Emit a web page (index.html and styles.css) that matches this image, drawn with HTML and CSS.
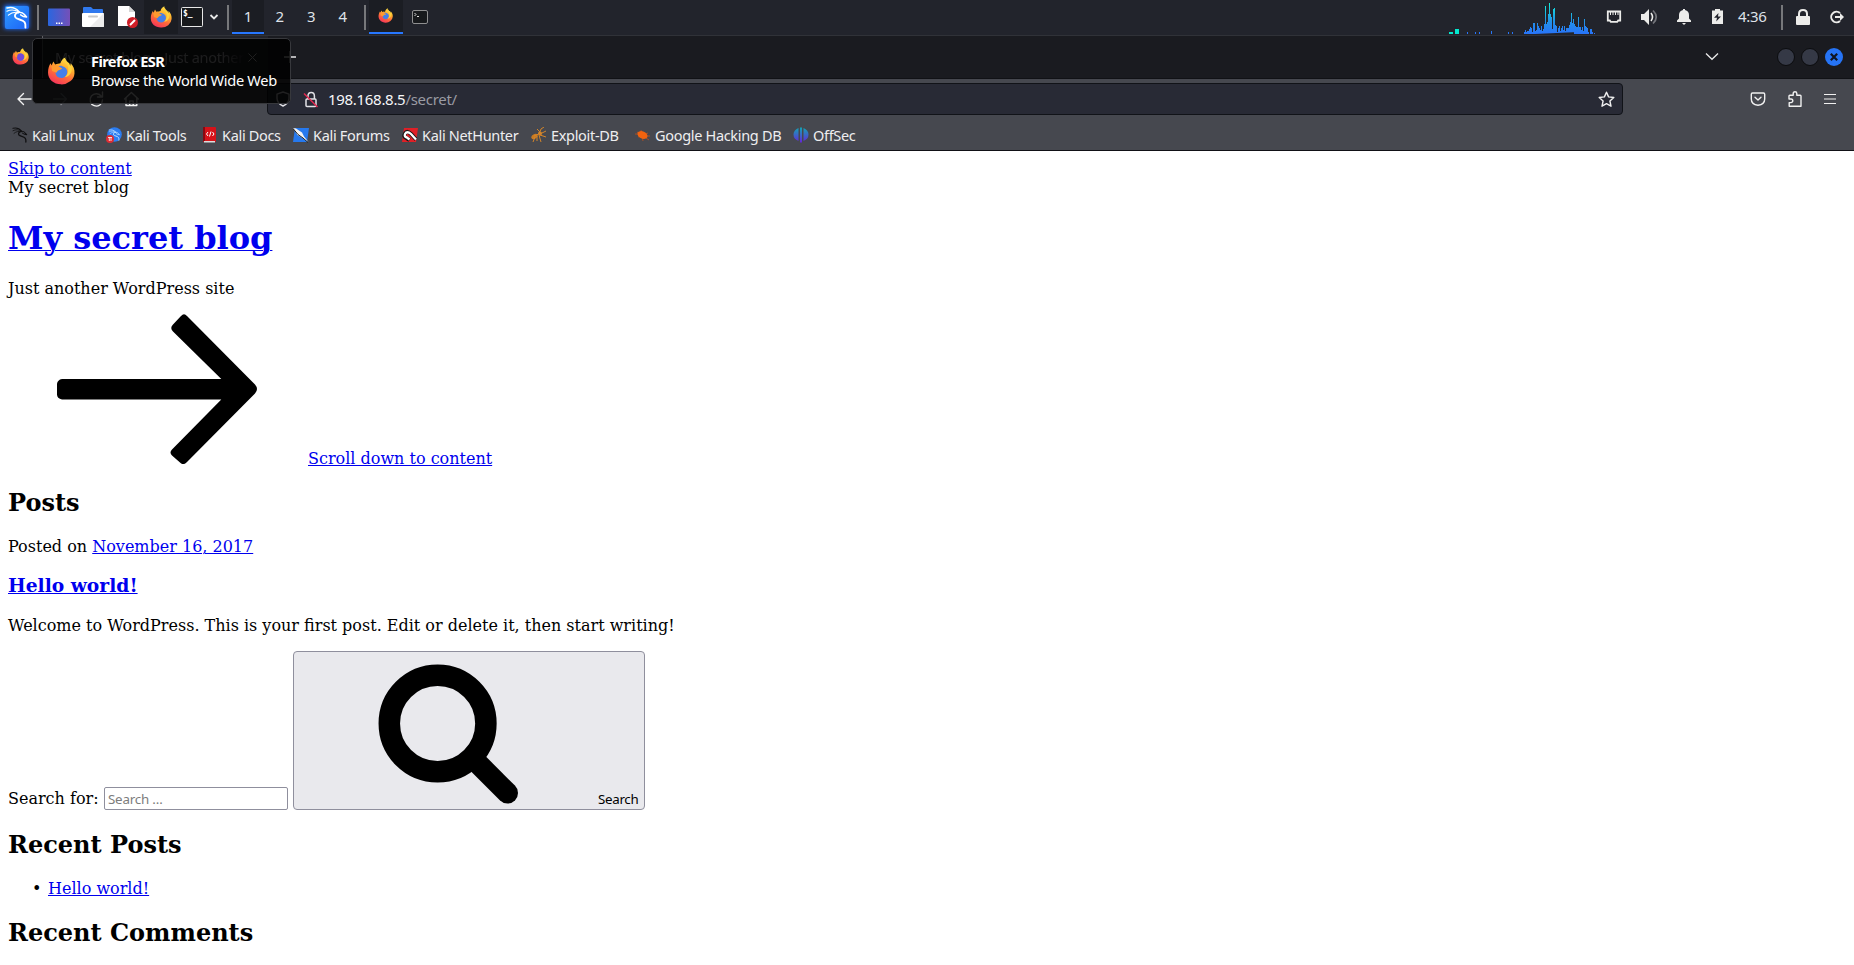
FILE: index.html
```html
<!DOCTYPE html>
<html lang="en">
<head>
<meta charset="utf-8">
<title>My secret blog – Just another WordPress site</title>
<link rel="stylesheet" href="styles.css">
</head>
<body>
<svg class="defs" width="0" height="0" aria-hidden="true">
  <defs>
    <linearGradient id="fxg" x1=".8" y1="0" x2=".3" y2="1"><stop offset="0" stop-color="#fff04f"/><stop offset=".35" stop-color="#ffb22e"/><stop offset=".65" stop-color="#ff6a3a"/><stop offset="1" stop-color="#f4335c"/></linearGradient>
    <linearGradient id="kb" x1="0" y1="0" x2="1" y2="1"><stop offset="0" stop-color="#2e9bff"/><stop offset="1" stop-color="#1d62f5"/></linearGradient>
    <linearGradient id="dg" x1="0" y1="0" x2="1" y2="0"><stop offset="0" stop-color="#2a66df"/><stop offset="1" stop-color="#7550b8"/></linearGradient>
    <linearGradient id="cpu" gradientUnits="userSpaceOnUse" x1="0" y1="3" x2="0" y2="34"><stop offset="0" stop-color="#12f0d8"/><stop offset=".55" stop-color="#2196e8"/><stop offset="1" stop-color="#2873f8"/></linearGradient>
    <linearGradient id="ofs" x1="0" y1="0" x2="0" y2="1"><stop offset="0" stop-color="#12a5b5"/><stop offset="1" stop-color="#6426d8"/></linearGradient>
    <symbol id="fox" viewBox="0 0 22 22">
      <path fill="url(#fxg)" d="M14.500.3c-.6 1.400-.4 2.600.8 3.900 1.400.9 2.300 1.800 2.900 3.300l.4-2.600c2.100 2.200 3.300 4.700 3 8A10.200 9.200 0 0 1 11 21.500C5.200 21.500.8 17.500.8 12.200c0-3 .9-5.400 2-7.200l.8 1.700L5 3.500l1.400 2.300C8 5.200 9.300 5.600 10.500 5c.6-2.300 2-4.100 4-4.700z"/>
      <path fill="#457fe8" d="M6.600 10c.9-2.700 3.300-3.500 5.500-2.800 2.700.8 4.200 2.800 3.800 5.300-.4 2.500-2.600 4-5 3.900-2.900-.1-4.600-2-4.300-6.400z"/>
      <path fill="#ff9a2f" d="M3.500 7c2-.8 4.500-.5 6.200.6 1 .6 1.400 1.100 2.200 1.200-.3 1-1.700 1.100-2.900 1.600-.8.4-1 1.300-1.700 1.900L4 11z"/>
      <path fill="#ffd23c" d="M13.500 3.500c2.500 1.500 3.100 3.400 3.200 6 .1 3-1 5-2.800 6.500 4.200-.9 6.300-4.200 5.400-8.500-.8-.6-1.300-1-1.800-2.600C16 4 15 3 14.500 1z"/>
    </symbol>
    <symbol id="dragon" viewBox="0 0 24 24">
      <g fill="none" stroke="currentColor" stroke-linecap="round" stroke-linejoin="round">
        <path stroke-width="1.600" d="M1.500 2C6 1 11 2 14 6"/>
        <path stroke-width="1.200" d="M1.500 5.500C6 3.200 10 4 14 6M3 9.500C6.500 6.500 10 6 14 7"/>
        <path stroke-width="2" d="M14 6.500c-4 .6-5 3.500-3.500 5.500 2 2.500 7 1.700 9.500 5 .8 1.200 1 3 .8 5.500"/>
        <path stroke-width="1.600" d="M13 6.500c3-.3 5.500.6 6.500 2.200l2.500 2.800-3.200-.5-3-1.800"/>
      </g>
    </symbol>
  </defs>
</svg>

<header class="panel">
  <span class="cell kali"><svg width="33" height="33" viewBox="0 0 33 33"><rect class="glow" x="4" y="4" width="25" height="24" rx="2" fill="#1d6dff"/><rect x="5" y="5" width="24" height="23" rx="2" fill="url(#kb)"/><use href="#dragon" x="5" y="5" width="24" height="23" color="#fff"/></svg></span>
  <i class="sep"></i>
  <span class="cell launch"><svg width="22" height="22" viewBox="0 0 22 22"><rect y="2.500" width="22" height="17.500" rx="1" fill="url(#dg)"/><path d="M8 16.500h1.500V18H8zm2.500 0H12V18h-1.500zm2.500 0h1.500V18H13z" fill="#fff"/></svg></span>
  <span class="cell folder"><svg width="22" height="22" viewBox="0 0 22 22"><path d="M1 9V2q0-1 1-1h7l2 2h9q1 0 1 1v5z" fill="#3079ee"/><rect y="7" width="22" height="14" rx="1" fill="#fff"/><path d="M22 7v13q0 1-1 1H8z" fill="#ececec"/><rect x="6" y="9.500" width="10" height="2" rx="1" fill="#c9c9c9"/></svg></span>
  <span class="cell doc"><svg width="22" height="22" viewBox="0 0 22 22"><path d="M1 0h11l6 6v14H1z" fill="#fff"/><path d="M12 0v6h6z" fill="#d6d6d6"/><circle cx="15.500" cy="16.500" r="5.500" fill="#cf1f28"/><path d="M13 19l5-5" stroke="#fff" stroke-width="2"/></svg></span>
  <span class="cell fxl"><svg width="22" height="22"><use href="#fox"/></svg></span>
  <span class="cell term"><svg width="22" height="20" viewBox="0 0 22 20"><rect x=".5" y=".5" width="21" height="19" rx="1" fill="#17191c" stroke="#e8e8e8"/><text class="prompt" x="2" y="9">$_</text></svg></span>
  <span class="cell chev"><svg width="10" height="8" viewBox="0 0 10 8"><path d="M1.500 2l3.500 3.500L8.500 2" fill="none" stroke="#e8e8e8" stroke-width="1.800"/></svg></span>
  <i class="sep"></i>
  <span class="cell ws on first">1</span><span class="cell ws">2</span><span class="cell ws">3</span><span class="cell ws">4</span>
  <i class="sep s3"></i>
  <span class="cell task on"><svg width="15" height="15"><use href="#fox"/></svg></span>
  <span class="cell task2"><svg width="16" height="14" viewBox="0 0 16 14"><rect x=".5" y=".5" width="15" height="13" rx="1.500" fill="#17191c" stroke="#8f8f90"/><path d="M2.500 3l1.500 1.500L2.500 6M5 6.500h2" fill="none" stroke="#ddd"/></svg></span>
  <span class="tray">
    <svg width="150" height="34" viewBox="0 0 150 34"><path fill="#04e8cf" d="M0 32h4v2H0zm6-3h4v5H6z"/><path fill="url(#cpu)" d="M18 32h1v2h-1zm8 0h1v2h-1zm4 0h1v2h-1zm12-1h1v3h-1zm17 1h1v2h-1zm4 0h1v2h-1zM75 34v-2h1v-2h1v2h1v-1h2v-2h1v-2h1v1h1v4h1v-9h2v9h1v2zM86 34v-3h1v-1h1v-7h1v3h1v2h1v2h1v-4h1v5h1v-2h1v-5h1V6h1v18h1v-2h1V14h1V3h1v11h1v3h1v12h1V9h1V8h1v17h1v1h1v6h1v-4h1v-2h1v5h1v-3h1v-2h1v4h1v-4h1v5h1v-3h3v-3h1v-3h1v-9h1v10h1v-4h1v5h1v4h1v-1h2v5zM125 34v-9h1v1h1v4h2V17h1v10h2v3h1v-3h1v4h1V19h1v7h1v1h1v1h1v4h1v2zM141 34v-5h2v3h1v2zM145 33h1v1h-1z"/></svg>
    <svg width="16" height="14" viewBox="0 0 16 14"><path d="M1.800 1.500h12.400v9h-2l-1 1.400h-6.400l-1-1.400h-2z" fill="none" stroke="#ececea" stroke-width="1.800"/><path d="M4.500 2v3M7 2v3M9.500 2v3M12 2v3" stroke="#ececea"/></svg>
    <svg width="18" height="16" viewBox="0 0 18 16"><path d="M0 5h3l5-5v16l-5-5H0z" fill="#ececea"/><path d="M10 4q3 4 0 8" fill="none" stroke="#ececea" stroke-width="1.600"/><path d="M12 1.500q6.500 6.500 0 13" fill="none" stroke="#74757b" stroke-width="1.700"/></svg>
    <svg class="bell" width="16" height="16" viewBox="0 0 16 16"><path d="M1 13v-1.500l2-2V6q0-4 4-5V0h2v1q4 1 4 5v3.500l2 2V13zM6 14h4l-2 2z" fill="#ececea"/></svg>
    <svg width="11" height="15" viewBox="0 0 11 15"><path d="M3 1.500V0h5v1.500h3V15H0V1.500z" fill="#ececea"/><path d="M6.500 4L2 8.700h3L4.200 12.500 9 7.600H6z" fill="#23242d"/></svg>
    <time>4:36</time><i class="sep"></i>
    <svg class="lock" width="14" height="16" viewBox="0 0 14 16"><rect y="7" width="14" height="9" rx="1" fill="#ececea"/><path d="M3 8V5q0-4 4-4t4 4v3" fill="none" stroke="#ececea" stroke-width="2"/></svg>
    <svg width="16" height="14" viewBox="0 0 16 14"><path d="M11 3a5.300 5.300 0 1 0 0 8" fill="none" stroke="#ececea" stroke-width="2"/><path d="M6 6h5V3l4 4-4 4V8H6z" fill="#ececea"/></svg>
  </span>
</header>

<section class="tabs">
  <svg class="tabfox" width="17" height="17"><use href="#fox"/><circle cx="8.500" cy="9" r="3.400" fill="#7547d8"/></svg>
  <div class="tab"><span>My secret blog – Just another</span><svg width="9" height="9" viewBox="0 0 9 9"><path d="M.5.500l8 8m0-8l-8 8" stroke="#ddd"/></svg></div>
  <svg class="plus" width="12" height="12" viewBox="0 0 12 12"><path d="M6 0v12M0 6h12" stroke="#e8e8e8" stroke-width="1.300"/></svg>
  <div class="win">
    <svg width="14" height="9" viewBox="0 0 14 9"><path d="M1 1.500l6 5.800 6-5.800" fill="none" stroke="#e8e8e8" stroke-width="1.300"/></svg>
    <b></b><b></b><svg class="close" width="18" height="18" viewBox="0 0 18 18"><circle cx="9" cy="9" r="9" fill="#2674f5"/><path d="M5.800 5.800l6.400 6.400m0-6.400l-6.400 6.400" stroke="#101521" stroke-width="2.200"/></svg>
  </div>
</section>

<section class="nav">
  <svg class="navl" width="124" height="18" viewBox="0 0 124 18" fill="none" stroke="#f2f2f2" stroke-width="1.400" stroke-linecap="round" stroke-linejoin="round">
    <path d="M14 9H1m5.500-5.500L1 9l5.500 5.500"/><path stroke="#85868c" d="M36.500 9h13M44 3.500L49.500 9 44 14.500"/><path d="M84.500 6.500A6.200 6.200 0 1 0 85.500 10M85.500 2v5h-5"/><path d="M107.500 9l6.900-6.500L121.300 9M109 8v7.500h10.800V8M112.700 15.500V11h3.500v4.500"/>
  </svg>
  <div class="url">
    <svg width="14" height="16" viewBox="0 0 14 16"><path d="M7 1l6 2.200v4q0 5-6 7.800-6-2.800-6-7.800v-4z" fill="none" stroke="#e2e2e6" stroke-width="1.400" stroke-linejoin="round"/></svg>
    <svg width="16" height="17" viewBox="0 0 16 17"><rect x="3" y="8" width="10" height="7.500" rx="1" fill="none" stroke="#e2e2e6" stroke-width="1.500"/><path d="M5 8V5q0-3.500 3.200-3.500T11.400 5v3" fill="none" stroke="#e2e2e6" stroke-width="1.500"/><path d="M1 2.500l13.500 13.500" stroke="#e22850" stroke-width="1.500"/></svg>
    <span class="addr">198.168.8.5<em>/secret/</em></span>
    <svg class="star" width="17" height="17" viewBox="0 0 17 17"><path d="M8.500 1.200l2.100 4.700 5.200.6-3.900 3.500 1.100 5.200-4.500-2.600L4 15.200 5.100 10 1.200 6.500l5.200-.6z" fill="none" stroke="#f0f0f0" stroke-width="1.400" stroke-linejoin="round"/></svg>
  </div>
  <div class="navr">
    <svg width="16" height="16" viewBox="0 0 16 16" fill="none" stroke="#f0f0f0" stroke-width="1.400" stroke-linecap="round" stroke-linejoin="round"><path d="M2.500 2h11q1.200 0 1.200 1.200V8q0 5.500-6.700 6.200Q1.300 13.500 1.300 8V3.200Q1.300 2 2.500 2zM5 6.300l3 2.800 3-2.800"/></svg>
    <svg width="16" height="18" viewBox="0 0 16 18" fill="none" stroke="#f0f0f0" stroke-width="1.400" stroke-linejoin="round"><path d="M2 6q0-.8.800-.8h3.400V3.500a1.800 1.800 0 0 1 3.600 0v1.700h3.400q.8 0 .8.800v10.200H2.200v-3.600H4a1.800 1.800 0 0 0 0-3.600H2z"/></svg>
    <svg width="14" height="12" viewBox="0 0 14 12"><path d="M1 1.500h12M1 6h12M1 10.500h12" stroke="#f0f0f0" stroke-width="1.200"/></svg>
  </div>
</section>

<nav class="marks">
  <a><svg width="16" height="16"><use href="#dragon" color="#101012"/></svg><span>Kali Linux</span></a>
  <a><svg width="16" height="16" viewBox="0 0 16 16"><circle cx="8.500" cy="7.500" r="7.300" fill="#2b7df2"/><use href="#dragon" x="2" y="2" width="13" height="12" color="#b8dcff"/><circle cx="4" cy="12" r="4" fill="#dc2c33"/><path d="M2 10.500h4M3.300 10.500v3.500M5 10.500v3.500" stroke="#fff" stroke-width=".8"/></svg><span>Kali Tools</span></a>
  <a class="docs"><svg width="13" height="16" viewBox="0 0 13 16"><rect width="13" height="15" rx="1" fill="#d61219"/><path d="M0 0h2v14H0z" fill="#850b12"/><path d="M1 14h11v1.500H1z" fill="#ddd"/><path d="M5 5L3.500 7 5 9M9.500 5L11 7 9.500 9M8 4.500L6.500 9.500" fill="none" stroke="#fff"/></svg><span>Kali Docs</span></a>
  <a><svg width="16" height="16" viewBox="0 0 16 16"><path d="M2 1h14l-2 14H0z" fill="#2679ee"/><path d="M0 1l3 .5 6 4 2 4 4.500 5.500-6-4-5-3z" fill="#f4f4f4"/><path d="M0 1.500l5 6 5 3.500 5 4.500" stroke="#222" fill="none"/></svg><span>Kali Forums</span></a>
  <a><svg width="16" height="16" viewBox="0 0 16 16"><path d="M2 1h14l-2 14H0z" fill="#df2027"/><path d="M14 12.500L9 7Q5 3 3 6.500q-2 3.500 1.500 4.500l3 2" fill="none" stroke="#151515" stroke-width="4"/><path d="M14 12.500L9 7Q5 3.500 3 7q-1 3 2 3.500l2.500 2" fill="none" stroke="#fff" stroke-width="2.300"/></svg><span>Kali NetHunter</span></a>
  <a><svg width="16" height="16" viewBox="0 0 16 16"><ellipse cx="3.500" cy="9.500" rx="3.400" ry="2.200" transform="rotate(-30 3.500 9.500)" fill="#c97b22"/><path d="M3 9l7-3M8 7l2-5 3-2M9 7l6-3M9 8l6 2M8 8l2 7M6 9l0 5M4 10l-2 5M9 5L6 2" fill="none" stroke="#d4852a" stroke-width="1"/><circle cx="9" cy="6.500" r="2" fill="#d4852a"/></svg><span>Exploit-DB</span></a>
  <a><svg width="16" height="16" viewBox="0 0 16 16"><path d="M2 5l12 8M3 10l10-4M6 3l2 11M0 7h5M11 9h4" stroke="#a84f27"/><ellipse cx="7.500" cy="8" rx="5.300" ry="3.500" transform="rotate(25 7.500 8)" fill="#f2630f"/></svg><span>Google Hacking DB</span></a>
  <a><svg width="16" height="16" viewBox="0 0 16 16"><path d="M5.500 1v13Q.5 12 .5 7.500T5.500 1zM7 .5h2v15H7zM10.500 1v13q5-2 5-6.500t-5-6.500z" fill="url(#ofs)"/></svg><span>OffSec</span></a>
</nav>

<aside class="tip"><svg width="28" height="28"><use href="#fox"/></svg><div><strong>Firefox ESR</strong><span>Browse the World Wide Web</span></div></aside>

<main class="page">
  <div><a href="#c">Skip to content</a></div>
  <div>My secret blog</div>
  <h1><a href="#h">My secret blog</a></h1>
  <p class="tagline">Just another WordPress site</p>
  <div class="scroll"><svg width="300" height="150" viewBox="0 0 300 150"><path d="M54 65H213.300L165 17.500Q161.500 14 165 10.500L173 2Q176 -1.500 179 2L247 70.500Q251 75 247 79.500L179 148Q175.500 152 172 148.500L164 141.500Q161 138.500 164 135.500L213.300 85.500H54Q49 84.500 49 80.500V70Q49.500 65.800 54 65z"/></svg><a href="#c">Scroll down to content</a></div>
  <h2 id="c">Posts</h2>
  <p>Posted on <a href="#d">November 16, 2017</a></p>
  <h3><a href="#p">Hello world!</a></h3>
  <p>Welcome to WordPress. This is your first post. Edit or delete it, then start writing!</p>
  <form class="search"><label for="q">Search for:</label><input id="q" type="search" placeholder="Search …"><button type="button"><svg width="300" height="150" viewBox="0 0 300 150"><circle cx="138.600" cy="69.500" r="48.300" fill="none" stroke="#000" stroke-width="21.500"/><path d="M177 107.500L208.500 139" stroke="#000" stroke-width="21" stroke-linecap="round"/></svg><span>Search</span></button></form>
  <h2>Recent Posts</h2>
  <ul><li><a href="#p">Hello world!</a></li></ul>
  <h2>Recent Comments</h2>
</main>
</body>
</html>
```
FILE: styles.css
```css
* { box-sizing: border-box; }
html, body { height: 965px; overflow: hidden; }
body { margin: 0; background: #fff; font-family: "Noto Sans", sans-serif; position: relative; }
svg { flex: none; display: block; }
.defs { position: absolute; }

/* desktop panel */
.panel { display: flex; height: 36px; background: #22242c; border-bottom: 1px solid #303238; align-items: center; color: #dfe2e8; font-size: 15px; }
.cell { display: flex; height: 34px; align-self: flex-start; align-items: center; justify-content: center; padding-bottom: 1px; }
.kali { width: 37px; padding: 0 5px 0 0; }
.glow { filter: blur(2px); }
.sep { width: 2px; height: 25px; background: #77787b; flex: none; }
.launch { width: 40px; }
.folder { width: 28px; }
.doc { width: 37px; padding-left: 5px; }
.fxl { width: 34px; background: #1b1d23; }
.term { width: 26px; padding-left: 1px; }
.prompt { font: bold 8px "DejaVu Sans Mono", monospace; fill: #fff; }
.chev { width: 23px; padding-right: 3px; }
.ws { width: 31.500px; padding: 0 0 2px; }
.first { margin-left: 3px; }
.s3 { margin-left: 5px; }
.on { background: #1b1d23; border-bottom: 2px solid #2777ff; }
.ws.on { width: 32px; padding: 0; }
.task { width: 34px; margin-left: 3px; }
.task2 { width: 34px; }
.tray { display: grid; grid-template-columns: 157px 35px 35px 36px 26px 43px 15px 33px 16px; align-items: center; margin-left: auto; padding-right: 9px; height: 34px; align-self: flex-start; }
.tray svg:not(:first-child) { margin-bottom: 1px; }
.tray time { font-size: 15px; line-height: 32px; padding-bottom: 2px; letter-spacing: -.35px; }

/* browser chrome */
.tabs { height: 43px; background: #1a1b20; border-bottom: 1px solid #111216; display: flex; align-items: center; }
.tabfox { margin: 0 13px 1px 12px; }
.tab { display: flex; align-items: center; justify-content: space-between; width: 226px; height: 42px; border-left: 1px solid #606166; padding: 0 11px 0 12px; background: #222329; color: #c8c9cc; font-size: 14.500px; white-space: nowrap; letter-spacing: -.3px; }
.tab span { -webkit-mask-image: linear-gradient(90deg, #000 88%, transparent); mask-image: linear-gradient(90deg, #000 88%, transparent); }
.plus { margin-left: 16px; }
.win { margin-left: auto; display: flex; align-items: center; gap: 6px; padding: 0 11px 1px 0; }
.win > svg:first-child { margin-right: 52px; }
.win b { width: 18px; height: 18px; border-radius: 50%; background: #353946; border: 1px solid #0b0c0e; }
.nav { height: 41px; display: flex; align-items: center; background: #46484f; padding: 0 17px 1px 0; }
.navl { margin: 0 126px 0 17px; }
.url { display: flex; align-items: center; width: 1356px; height: 32px; background: #282a35; border: 1px solid #111318; border-radius: 4px; padding: 0 7px 0 8px; }
.url > svg + svg { margin-left: 13px; }
.addr { margin: 0 auto 0 9px; padding-bottom: 1px; color: #f7f7f9; font-size: 15px; line-height: 20px; letter-spacing: -.3px; }
.addr em { font-style: normal; color: #9a9ba3; }
.navr { margin-left: auto; display: grid; grid-template-columns: 37px 36px 14px; align-items: center; }
.marks { display: grid; grid-template-columns: 94px 96px 91px 109px 129px 104px 158px 100px; height: 31px; background: #46484f; border-bottom: 1px solid #111116; padding-left: 12px; color: #eeeef0; font-size: 14.500px; letter-spacing: -.32px; white-space: nowrap; }
.marks a { display: flex; align-items: center; gap: 4px; height: 29px; }
.marks .docs { gap: 6px; padding-left: 1px; }
.tip { position: absolute; left: 32px; top: 38px; width: 259px; height: 66px; display: flex; gap: 16px; align-items: center; padding: 0 12px 1px 14px; background: rgba(0,0,0,.86); border: 1px solid #37383c; border-radius: 5px; color: #fff; font-size: 14.600px; line-height: 19px; letter-spacing: -.33px; white-space: nowrap; }
.tip strong, .tip span { display: block; }
.tip strong { letter-spacing: -.6px; }

/* unstyled blog page */
.page { padding: 8px; font: 16px/19px "DejaVu Serif", serif; color: #000; }
.page a { color: #0000ee; text-decoration-thickness: 1px; }
.page p { margin: 16px 0; }
.page h1 { margin: 22px 0 21px; font-size: 32px; line-height: 39px; }
.page .tagline { margin: 0 0 16px; }
.scroll { display: flex; height: 154px; }
.scroll a { align-self: flex-end; }
.page h2 { margin: 20px 0; font-size: 24px; line-height: 29px; }
.page h3 { margin: 18px 0 20px; font-size: 18.720px; line-height: 22px; }
.search { display: flex; align-items: flex-end; height: 159px; margin: 0 0 20px; }
.search label { margin-bottom: 2px; width: 96px; }
.search input { width: 184px; height: 23px; margin: 0 5px 0 0; border: 1px solid #8f8f9d; border-radius: 2px; padding: 1px 3px; font: 13.333px "Noto Sans", sans-serif; letter-spacing: -.2px; background: #fff; }
.search input::placeholder { color: #7c7c7c; }
.search button { display: flex; align-items: flex-end; width: 352px; height: 159px; margin: 0; padding: 0 0 5px 5px; border: 1px solid #8f8f9d; border-radius: 4px; background: #e9e9ed; color: #000; font: 13.333px/16px "Noto Sans", sans-serif; }
.search button span { margin: 0 0 -3px -1px; letter-spacing: -.3px; }
.page ul { margin: 20px 0; padding-left: 40px; list-style: none; }
.page li::before { content: "•"; display: inline-block; width: 16px; margin-left: -16px; }
```
